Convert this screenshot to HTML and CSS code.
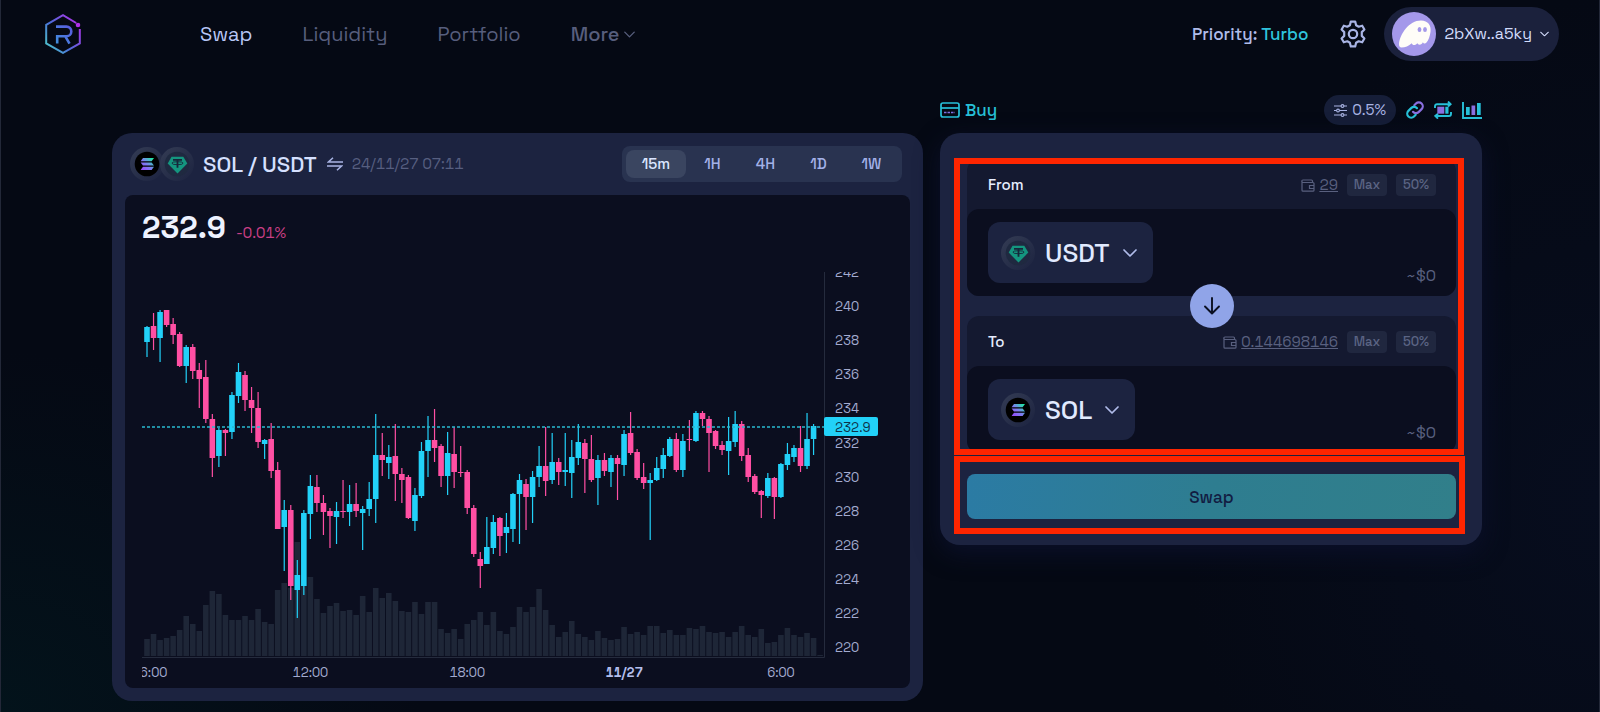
FILE: index.html
```html
<!DOCTYPE html>
<html lang="en">
  <head>
  <meta charset="utf-8">
  <meta name="viewport" content="width=device-width, initial-scale=1">
  <title>Swap SOL / USDT</title>
  <link rel="stylesheet" href="styles.css">
  </head>
  <body>
    <!-- shared icons -->
    <svg class="sprite" width="0" height="0" aria-hidden="true">
      <defs>
        <linearGradient id="logo-grad" x1="0" y1="1" x2="1" y2="0.2">
          <stop offset="0" stop-color="#4fd6c8"/>
          <stop offset="0.45" stop-color="#4a6fd8"/>
          <stop offset="1" stop-color="#b02fe8"/>
        </linearGradient>
        <linearGradient id="letter-grad" x1="0" y1="1" x2="1" y2="0">
          <stop offset="0" stop-color="#3f8fdc"/>
          <stop offset="1" stop-color="#5a5be0"/>
        </linearGradient>
        <linearGradient id="sol-grad" gradientUnits="userSpaceOnUse" x1="11" y1="23" x2="23" y2="11">
          <stop offset="0" stop-color="#9a45ff"/>
          <stop offset="0.5" stop-color="#7a80ee"/>
          <stop offset="1" stop-color="#19f0a0"/>
        </linearGradient>
        <linearGradient id="coin-ring" x1="0" y1="0" x2="1" y2="1">
          <stop offset="0" stop-color="#343c54"/>
          <stop offset="1" stop-color="#1c2340"/>
        </linearGradient>
      </defs>
      <symbol id="coin-sol" viewBox="0 0 34 34">
        <circle cx="17" cy="17" r="17" fill="url(#coin-ring)"/>
        <circle cx="17" cy="17" r="12.3" fill="#000"/>
        <g fill="url(#sol-grad)">
          <path d="M13 11h11l-2.4 3.2H10.6z"/>
          <path d="M10.6 15.4h11l2.4 3.2H13z"/>
          <path d="M13 19.8h11l-2.4 3.2H10.6z"/>
        </g>
      </symbol>
      <symbol id="coin-usdt" viewBox="0 0 34 34">
        <circle cx="17" cy="17" r="17" fill="url(#coin-ring)"/>
        <circle cx="17" cy="17" r="12.3" fill="#1f2940"/>
        <path d="M11.5 9.8h11.8l4 6.8-9.8 9.8-9.8-9.8z" fill="#14967f"/>
        <path d="M13 12.8h9M17.5 12.8v8" fill="none" stroke="#16263a" stroke-width="1.8"/>
        <ellipse cx="17.5" cy="16.2" rx="5.6" ry="1.5" fill="none" stroke="#16263a" stroke-width="0.9"/>
      </symbol>
      <symbol id="chevron" viewBox="0 0 14 8">
        <path d="M1 1l6 6 6-6" fill="none" stroke="currentColor" stroke-width="1.7" stroke-linecap="round" stroke-linejoin="round"/>
      </symbol>
      <symbol id="wallet" viewBox="0 0 14 13">
        <path d="M1 2v9.200a1 1 0 0 0 1 1h10a1 1 0 0 0 1-1V4.500a1 1 0 0 0-1-1H2A1 1 0 0 1 2 1h8.500a1 1 0 0 1 1 1v1.500" fill="none" stroke="currentColor" stroke-width="1.200"/>
        <path d="M13 6.500H8.500v3H13" fill="none" stroke="currentColor" stroke-width="1.200"/>
      </symbol>
    </svg>

    <header class="topbar">
      <a class="logo" href="#" aria-label="Home">
        <svg width="36" height="40" viewBox="0 0 36 40" fill="none" stroke="url(#logo-grad)" stroke-width="2">
          <path d="M31.2 9L18 1.2 1.2 10.8v18.6L18 38.8l16.8-9.4V15"/>
          <circle cx="33" cy="11" r="1.3" fill="#b02fe8" stroke="#b02fe8"/>
          <path d="M11 12.6h10.5a4.5 4.5 0 0 1 0 9.6H12.2v7.4M20.5 22.6l4 7" stroke="url(#letter-grad)" stroke-width="2.6"/>
        </svg>
      </a>
      <nav class="nav">
        <a class="nav-link active" href="#">Swap</a>
        <a class="nav-link" href="#">Liquidity</a>
        <a class="nav-link" href="#">Portfolio</a>
        <button class="nav-link nav-more" type="button">More <svg width="11" height="7"><use href="#chevron"/></svg></button>
      </nav>
      <div class="account">
        <button class="priority" type="button">Priority: <span>Turbo</span></button>
        <button class="icon-btn" type="button" aria-label="Settings">
          <svg width="26" height="28" viewBox="0 0 26 28" fill="none" stroke="#a9b4e4" stroke-width="2.2" stroke-linejoin="round">
            <path d="M10.8 1.6h4.4l.9 3.6 2.6 1.5 3.5-1 2.2 3.8-2.6 2.6v3.8l2.6 2.6-2.2 3.8-3.5-1-2.6 1.5-.9 3.6h-4.4l-.9-3.6-2.6-1.5-3.5 1-2.2-3.8 2.6-2.6v-3.8L1.6 9.5l2.2-3.8 3.5 1 2.6-1.5z"/>
            <circle cx="13" cy="14" r="4.2"/>
          </svg>
        </button>
        <button class="wallet-pill" type="button">
          <svg width="44" height="44" viewBox="0 0 44 44">
            <circle cx="22" cy="22" r="22" fill="#a498ea"/>
            <path d="M7 32C8 22 17 8.5 29 8.5c7 0 10.5 5 9.5 11.5-.8 4.5-1.8 8-4 10.5-1.3 1.5-3 1.2-3.6-.3-1 3-5 3.3-5.6.8-1.5 2.7-5 2.6-5.6.2C17 34 13 35.5 9.5 35.5 7.8 35.5 6.9 34 7 32z" fill="#fffdf8"/>
            <ellipse cx="27.5" cy="17.5" rx="1.9" ry="2.6" fill="#a498ea"/>
            <ellipse cx="33" cy="17.5" rx="1.9" ry="2.6" fill="#a498ea"/>
          </svg>
          2bXw..a5ky
          <svg class="pill-chevron" width="9" height="6" viewBox="0 0 14 8"><use href="#chevron"/></svg>
        </button>
      </div>
    </header>

    <main class="content">
      <div class="toolbar">
        <a class="buy" href="#">
          <svg width="20" height="16" viewBox="0 0 20 16" fill="none" stroke="#27c1d9" stroke-width="1.7">
            <rect x="1" y="1" width="18" height="14" rx="2"/>
            <path d="M1 6h18"/>
            <path d="M4 10.5h11" stroke="#7f6fe0" stroke-dasharray="2.5 1"/>
          </svg>
          Buy
        </a>
        <div class="tools">
          <button class="slippage" type="button">
            <svg width="13" height="13" viewBox="0 0 13 13" fill="#161e38" stroke="#a9b4e4" stroke-width="1.1">
              <path d="M0 2h13M0 6.5h13M0 11h13"/>
              <circle cx="8.5" cy="2" r="1.4"/><circle cx="4" cy="6.5" r="1.4"/><circle cx="8.5" cy="11" r="1.4"/>
            </svg>
            0.5%
          </button>
          <button class="icon-btn" type="button" aria-label="Copy link">
            <svg width="18" height="18" viewBox="0 0 18 18" fill="none" stroke-width="2.2" stroke-linecap="round">
              <path d="M7 10.8a3.8 3.8 0 0 0 5.6.3l3-3a3.9 3.9 0 0 0-5.6-5.6L8.3 4.2" stroke="#8a6fe0"/>
              <path d="M11 7.2a3.8 3.8 0 0 0-5.6-.3l-3 3a3.9 3.9 0 0 0 5.6 5.6l1.7-1.7" stroke="#27c1d9"/>
            </svg>
          </button>
          <button class="icon-btn" type="button" aria-label="Recurring orders">
            <svg width="18" height="18" viewBox="0 0 18 18" fill="none" stroke="#27c1d9" stroke-width="1.9">
              <path d="M1 7V5.2a2 2 0 0 1 2-2h13M14 .5l2.7 2.7L14 5.5M17 11v2a2 2 0 0 1-2 2H2M4 12.7L1.3 15 4 17.6"/>
              <rect x="3.3" y="5.7" width="7" height="7" fill="#8a6fe0" stroke="none"/>
              <rect x="11.3" y="5.7" width="3.2" height="7" fill="#27c1d9" stroke="none"/>
            </svg>
          </button>
          <button class="icon-btn" type="button" aria-label="Toggle chart">
            <svg width="20" height="17" viewBox="0 0 20 17">
              <path d="M1 0v16h19" fill="none" stroke="#27c1d9" stroke-width="1.9"/>
              <path d="M4 5h3.7v8H4zM15 1h3.7v12H15z" fill="#27c1d9"/>
              <path d="M9.5 3.5h3.7V13H9.5z" fill="#8a6fe0"/>
            </svg>
          </button>
        </div>
      </div>

      <section class="card chart-card">
        <div class="chart-head">
          <span class="coins">
            <svg width="34" height="34"><use href="#coin-sol"/></svg>
            <svg width="34" height="34"><use href="#coin-usdt"/></svg>
          </span>
          <h1 class="pair">SOL / USDT</h1>
          <button class="icon-btn" type="button" aria-label="Flip pair">
            <svg width="16" height="14" viewBox="0 0 16 14" fill="none" stroke="#a9b4e4" stroke-width="1.5">
              <path d="M6 .8L1.5 5H16M10 13.2L14.5 9H0"/>
            </svg>
          </button>
          <time class="stamp" datetime="2024-11-27T07:11">24/11/27 07:11</time>
          <div class="ranges">
            <button class="range active" type="button">15m</button>
            <button class="range" type="button">1H</button>
            <button class="range" type="button">4H</button>
            <button class="range" type="button">1D</button>
            <button class="range" type="button">1W</button>
          </div>
        </div>
        <div class="chart-body">
          <div class="quote">
            <strong class="price">232.9</strong>
            <span class="change">-0.01%</span>
          </div>
          <svg id="chart" class="chart" viewBox="0 0 751 409" role="img" aria-label="SOL / USDT 15 minute candles"></svg>
        </div>
      </section>

      <form class="card swap-card">
        <div class="pair-box marked">
          <div class="side">
            <div class="side-head">
              <label for="amount-from">From</label>
              <span class="balance"><svg width="14" height="13"><use href="#wallet"/></svg><a href="#">29</a></span>
              <button class="chip" type="button">Max</button>
              <button class="chip" type="button">50%</button>
            </div>
            <div class="side-body">
              <button class="token" type="button">
                <svg width="34" height="34"><use href="#coin-usdt"/></svg>
                USDT
                <svg class="token-chevron" width="14" height="8"><use href="#chevron"/></svg>
              </button>
              <div class="amount">
                <input id="amount-from" type="text" inputmode="decimal">
                <span>~$0</span>
              </div>
            </div>
          </div>
          <button class="flip" type="button" aria-label="Switch tokens">
            <svg width="18" height="18" viewBox="0 0 18 18" fill="none" stroke="#0b1022" stroke-width="1.9" stroke-linecap="round" stroke-linejoin="round">
              <path d="M9 1v15M2 9.5l7 7 7-7"/>
            </svg>
          </button>
          <div class="side">
            <div class="side-head">
              <label for="amount-to">To</label>
              <span class="balance"><svg width="14" height="13"><use href="#wallet"/></svg><a href="#">0.144698146</a></span>
              <button class="chip" type="button">Max</button>
              <button class="chip" type="button">50%</button>
            </div>
            <div class="side-body">
              <button class="token" type="button">
                <svg width="34" height="34"><use href="#coin-sol"/></svg>
                SOL
                <svg class="token-chevron" width="14" height="8"><use href="#chevron"/></svg>
              </button>
              <div class="amount">
                <input id="amount-to" type="text" inputmode="decimal">
                <span>~$0</span>
              </div>
            </div>
          </div>
        </div>
        <div class="submit-box marked">
          <button class="submit" type="button">Swap</button>
        </div>
      </form>
    </main>
    <script src="chart.js"></script>
  </body>
</html>
```

FILE: styles.css
```css
* {
  box-sizing: border-box;
}

body {
  margin: 0;
  min-height: 100vh;
  border: solid #232838;
  border-width: 0 1px;
  background:
    radial-gradient(ellipse 420px 360px at 0 100%, #03131b, transparent),
    radial-gradient(ellipse 420px 500px at 100% 70%, #070d1e, transparent),
    #050914;
  color: #e6edff;
  font-family: "Space Grotesk", Inter, "Liberation Sans", sans-serif;
  font-size: 16px;
  line-height: 20px;
}

button {
  margin: 0;
  padding: 0;
  border: 0;
  background: none;
  color: inherit;
  font: inherit;
  cursor: pointer;
}

a {
  color: inherit;
  text-decoration: none;
}

svg {
  display: block;
  flex: none;
}

.sprite {
  position: absolute;
}

/* top bar */
.topbar {
  display: flex;
  align-items: center;
  padding: 7px 40px 0 44px;
}

.nav {
  display: flex;
  gap: 50px;
  margin-left: 119px;
}

.nav-link {
  color: #575e7d;
  font-size: 20px;
  line-height: 24px;
}

.nav-link.active {
  color: #b8c6f6;
}

.nav-more {
  display: flex;
  align-items: center;
  gap: 4px;
  font-weight: 500;
}

.account {
  display: flex;
  align-items: center;
  margin-left: auto;
}

.priority {
  margin-right: 32px;
  color: #b0bcea;
  font-size: 17px;
  font-weight: 500;
}

.priority span {
  color: #2fc3dd;
}

.icon-btn {
  display: flex;
}

.wallet-pill {
  display: flex;
  align-items: center;
  gap: 8px;
  margin-left: 18px;
  padding: 5px 10px 5px 8px;
  border-radius: 27px;
  background: #1b213c;
  color: #d3dcfb;
}

/* page grid */
.content {
  display: grid;
  grid-template-columns: 811fr 542fr;
  gap: 8px 17px;
  align-items: start;
  padding: 34px 117px 0 111px;
}

.toolbar {
  grid-column: 2;
  display: flex;
  align-items: center;
  justify-content: space-between;
}

.buy {
  display: flex;
  align-items: center;
  gap: 5px;
  color: #27c1d9;
  font-size: 17px;
  font-weight: 500;
}

.tools {
  display: flex;
  align-items: center;
  gap: 10px;
}

.slippage {
  display: flex;
  align-items: center;
  gap: 5px;
  padding: 5px 10px;
  border-radius: 15px;
  background: #161e38;
  color: #a9b4e4;
  font-size: 15px;
}

.card {
  border-radius: 20px;
  background: #1c2340;
}

/* chart */
.chart-card {
  padding: 0 13px 13px;
}

.chart-head {
  display: flex;
  align-items: center;
  height: 62px;
  padding: 0 8px 0 5px;
}

.coins {
  display: flex;
  margin-right: 9px;
}

.coins svg + svg {
  margin-left: -4px;
}

.pair {
  margin: 0 10px 0 0;
  color: #d5e0ff;
  font-size: 22px;
  font-weight: 500;
  font-feature-settings: "ss04";
}

.stamp,
.change,
.balance,
.chart {
  font-variant-numeric: tabular-nums;
}

.stamp {
  margin-left: 9px;
  color: #575f80;
  font-size: 15px;
}

.ranges {
  display: flex;
  margin-left: auto;
  padding: 4px;
  border-radius: 8px;
  background: #293350;
}

.range {
  width: 53px;
  height: 28px;
  border-radius: 8px;
  color: #a3b1e8;
  font-size: 15px;
  font-weight: 500;
}

.range.active {
  width: 60px;
  background: #3a4560;
  color: #dbe5ff;
}

.chart-body {
  padding: 14px 17px 7px;
  border-radius: 8px;
  background: #0b0e1f;
}

.quote {
  display: flex;
  align-items: baseline;
  gap: 10px;
  height: 36px;
  margin-bottom: 27px;
  line-height: 36px;
}

.price {
  color: #eef2ff;
  font-size: 31px;
  font-weight: 600;
}

.change {
  color: #c93f85;
  font-size: 15px;
}

.chart {
  width: 100%;
  height: auto;
  overflow: hidden;
  fill: #a3abd0;
  font-size: 13px;
}

.chart .vol { fill: #1e2637; }
.chart .up { fill: #22d1f8; }
.chart .down { fill: #ff4fa3; }
.chart .axis { stroke: #252b3d; }
.chart .last { stroke: #2ab9cf; stroke-width: 1.5; stroke-dasharray: 3 2; }
.chart .tag-text { fill: #0d3247; }
.chart .day { fill: #b4bfee; font-weight: 700; }

/* swap form */
.swap-card {
  padding: 26px 26px 26px 27px;
  box-shadow: 0 8px 24px #0b102a;
}

.marked {
  position: relative;
}

.marked::after {
  content: "";
  position: absolute;
  inset: -1px -8px -2px -13px;
  border: 6px solid #fe2500;
  pointer-events: none;
}

.pair-box {
  display: flex;
  flex-direction: column;
  align-items: center;
}

.side {
  width: 100%;
  border-radius: 12px;
  background: #141930;
}

.side-head {
  display: flex;
  align-items: center;
  gap: 9px;
  height: 50px;
  padding: 2px 20px 0 21px;
  font-size: 15px;
}

.side-head label {
  margin-right: auto;
  font-weight: 500;
}

.balance {
  display: flex;
  align-items: center;
  gap: 4px;
  color: #59607f;
}

.balance a {
  text-decoration: underline;
}

.chip {
  width: 40px;
  height: 22px;
  border-radius: 4px;
  background: #20273f;
  color: #5b6484;
  font-size: 13px;
  font-weight: 500;
}

.side-body {
  display: flex;
  justify-content: space-between;
  height: 87px;
  padding: 13px 20px 10px 21px;
  border-radius: 12px;
  background: #0b0e1f;
}

.token {
  display: flex;
  align-items: center;
  height: 61px;
  padding: 0 16px 0 13px;
  border-radius: 12px;
  background: #1c2340;
  color: #e1eaff;
  font-size: 26px;
  font-weight: 500;
  font-feature-settings: "ss04";
  gap: 10px;
}

.token-chevron {
  margin-left: 3px;
  color: #b0bcea;
}

.amount {
  display: flex;
  flex-direction: column;
  justify-content: space-between;
  align-items: flex-end;
  color: #59607f;
}

.amount input {
  width: 240px;
  height: 36px;
  padding: 0;
  border: 0;
  outline: 0;
  background: none;
  color: #e6edff;
  font: inherit;
  font-size: 26px;
  text-align: right;
}

/* overlaps both sides evenly */
.flip {
  position: relative;
  z-index: 1;
  display: flex;
  align-items: center;
  justify-content: center;
  width: 44px;
  height: 44px;
  margin: -12px 0;
  border-radius: 50%;
  background: #90a4e8;
}

.submit-box {
  margin-top: 21px;
}

.submit-box::after {
  inset: -18px -9px -15px -13px;
}

.submit {
  display: block;
  width: 100%;
  height: 45px;
  border-radius: 8px;
  background: linear-gradient(100deg, #2b7ba4, #2e7d90 50%, #317f8a);
  color: #121c42;
  font-size: 17px;
  font-weight: 500;
}
```

FILE: chart.js
```js
// Candles: direction, then high, body top, body bottom, low on the plot.
var candles = [
  "u 54 55 70 85", "d 41 54 66 78", "u 38 40 66 90", "d 38 38 53 55",
  "d 46 52 63 72", "d 60 62 94 95", "u 73 75 94 111", "d 72 75 99 107",
  "d 91 98 107 136", "d 88 105 147 151", "d 142 147 186 205", "u 156 158 184 195",
  "d 157 158 161 184", "u 120 123 160 167", "u 91 100 124 131", "d 99 103 128 139",
  "d 115 128 136 161", "d 120 136 170 176", "u 167 168 172 187", "d 151 167 199 206",
  "d 190 198 257 257", "u 228 238 255 299", "d 233 238 314 328", "u 288 303 318 346",
  "u 238 241 314 323", "u 203 214 242 267", "d 203 215 231 240", "d 223 231 240 263",
  "d 236 239 244 276", "u 230 239 245 272", "d 208 239 240 246", "u 213 232 240 254",
  "d 211 232 239 245", "u 234 237 241 278", "u 210 227 237 244", "u 142 183 227 251",
  "d 161 183 188 204", "u 173 185 191 207", "d 152 184 202 229", "d 196 202 208 231",
  "d 203 205 246 247", "u 216 223 249 259", "u 170 179 224 226", "u 144 168 179 205",
  "d 137 168 176 190", "d 172 174 204 215", "u 160 181 204 223", "d 155 182 200 216",
  "d 174 200 201 205", "d 198 200 236 242", "d 233 236 282 285", "d 280 287 294 316",
  "u 245 275 292 292", "u 243 250 276 282", "d 245 246 264 284", "u 241 255 261 281",
  "u 221 222 257 270", "u 202 208 222 272", "d 207 212 225 258", "u 199 205 225 251",
  "u 174 194 205 215", "d 155 194 209 224", "u 161 190 208 212", "d 186 190 200 213",
  "u 161 198 200 214", "u 168 185 201 226", "u 152 170 186 193", "d 167 171 187 221",
  "d 163 187 208 210", "u 183 188 206 233", "d 181 188 199 204", "u 183 186 200 215",
  "d 183 186 192 228", "u 158 162 193 204", "d 140 161 181 183", "d 177 180 206 208",
  "d 191 205 211 217", "u 201 208 211 268", "u 185 196 208 209", "u 176 183 197 206",
  "u 165 167 184 185", "d 161 167 198 200", "u 162 169 198 205", "d 148 167 168 179",
  "u 139 141 169 170", "d 139 141 147 154", "d 144 147 161 200", "d 158 159 174 177",
  "d 169 173 178 183", "u 145 169 179 203", "u 139 152 170 175", "d 149 152 184 189",
  "d 176 183 205 210", "d 202 204 220 222", "d 218 219 223 246", "u 201 206 224 226",
  "d 205 206 225 247", "u 191 192 225 226", "u 171 182 193 198", "u 173 176 185 190",
  "d 154 176 194 200", "u 141 167 194 197", "u 152 154 167 183"
];

var volumes = [
  17, 22, 16, 18, 20, 26, 40, 32, 25, 51, 65, 62, 41, 36, 36, 40, 36, 47, 34, 32,
  66, 73, 68, 114, 70, 79, 57, 43, 50, 53, 45, 46, 41, 60, 44, 68, 58, 63, 55, 45,
  44, 54, 42, 54, 54, 27, 23, 27, 17, 32, 36, 44, 31, 44, 25, 22, 29, 49, 44, 49,
  67, 46, 31, 19, 24, 35, 22, 19, 16, 25, 18, 16, 17, 29, 22, 24, 21, 30, 30, 23,
  26, 21, 21, 28, 27, 30, 24, 23, 24, 19, 24, 30, 21, 19, 27, 13, 14, 21, 28, 21,
  19, 23, 18, 1
];

var STEP = 6.535, FIRST = 5, BASE = 384;
var chart = document.getElementById("chart");

function add(name, attrs, text) {
  var el = document.createElementNS("http://www.w3.org/2000/svg", name);
  for (var key in attrs) {
    el.setAttribute(key, attrs[key]);
  }
  if (text) {
    el.textContent = text;
  }
  chart.appendChild(el);
}

function bar(cls, x, y, w, h) {
  add("rect", { "class": cls, x: x, y: y, width: w, height: h });
}

volumes.forEach(function (v, i) {
  bar("vol", FIRST + i * STEP - 2.8, BASE - v, 5.6, v);
});

add("path", { "class": "axis", fill: "none", d: "M0 385.5H682.5V0" });

candles.forEach(function (row, i) {
  var c = row.split(" ");
  var cls = c[0] === "u" ? "up" : "down";
  var x = FIRST + i * STEP;
  bar(cls, x - 0.6, +c[1], 1.2, c[4] - c[1]);
  bar(cls, x - 2.8, +c[2], 5.6, Math.max(c[3] - c[2], 1));
});

// price axis
for (var p = 242; p >= 220; p -= 2) {
  add("text", { x: 693, y: 39 + (240 - p) * 17.07 }, String(p));
}

add("path", { "class": "last", d: "M0 155H683" });
add("rect", { "class": "up", x: 682, y: 145, width: 54, height: 19, rx: 2 });
add("text", { "class": "tag-text", x: 693, y: 160 }, "232.9");

// time axis
[["6:00", 1], ["12:00", 25], ["18:00", 49], ["11/27", 73], ["6:00", 97]].forEach(function (t) {
  add("text", {
    "class": t[0] === "11/27" ? "day" : "hour",
    x: FIRST + t[1] * STEP,
    y: 405,
    "text-anchor": "middle"
  }, t[0]);
});
```
